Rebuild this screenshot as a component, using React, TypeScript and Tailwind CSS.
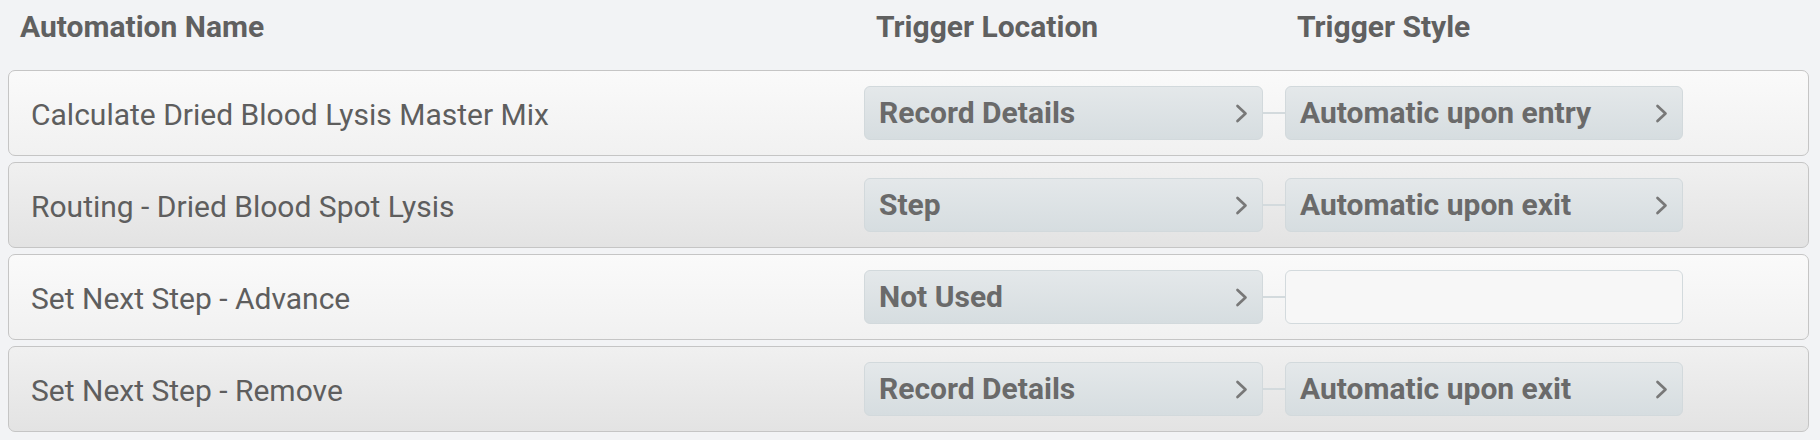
import React from "react";

type Row = { name: string; location: string; style: string | null; shade: "light" | "dark" };

const rows: Row[] = [
  { name: "Calculate Dried Blood Lysis Master Mix", location: "Record Details", style: "Automatic upon entry", shade: "light" },
  { name: "Routing - Dried Blood Spot Lysis", location: "Step", style: "Automatic upon exit", shade: "dark" },
  { name: "Set Next Step - Advance", location: "Not Used", style: null, shade: "light" },
  { name: "Set Next Step - Remove", location: "Record Details", style: "Automatic upon exit", shade: "dark" },
];

function Chevron() {
  return (
    <svg width="13" height="19" viewBox="0 0 13 19" className="shrink-0">
      <polyline points="2.5,2 10.5,9.5 2.5,17" fill="none" stroke="#787878" strokeWidth="2.7" strokeLinecap="round" strokeLinejoin="round" />
    </svg>
  );
}

function Pill({ label, width }: { label: string; width: string }) {
  return (
    <div
      className={`${width} h-[54px] shrink-0 flex items-center justify-between pl-[14px] pr-[14px] rounded-[6px] border border-[#d2d9dc] bg-linear-to-b from-[#e4e8ea] to-[#d6dde0]`}
    >
      <span className="text-[30px] leading-[30px] font-bold text-[#6a6a6a] whitespace-nowrap">{label}</span>
      <Chevron />
    </div>
  );
}

export default function App() {
  return (
    <div className="min-h-screen bg-[#f2f3f5] pl-2 pr-[11px] font-['Roboto','Liberation_Sans',sans-serif]">
      <div className="flex h-[70px] pt-[12px] text-[30px] leading-[30px] font-bold text-[#606060]">
        <div className="flex-1 pl-[12px]">Automation Name</div>
        <div className="w-[421px] pl-[12px]">Trigger Location</div>
        <div className="w-[398px] pl-[12px]">Trigger Style</div>
        <div className="w-[126px]" />
      </div>
      <div className="flex flex-col gap-[6px]">
        {rows.map((r) => (
          <div
            key={r.name}
            className={`flex items-center h-[86px] pl-[22px] pr-[125px] rounded-[7px] border border-[#c5c5c5] bg-linear-to-b ${
              r.shade === "light" ? "from-[#fafafa] to-[#f1f1f1]" : "from-[#f0f0f0] to-[#e3e3e3]"
            }`}
          >
            <div className="flex-1 pt-[3px] text-[30px] leading-[30px] text-[#5e5e5e] whitespace-nowrap">{r.name}</div>
            <Pill label={r.location} width="w-[399px]" />
            <div className="w-[22px] h-[2px] bg-[#d3dadd] shrink-0" />
            {r.style ? (
              <Pill label={r.style} width="w-[398px]" />
            ) : (
              <div className="w-[398px] h-[54px] shrink-0 rounded-[6px] border border-[#d3dadd] bg-[#f7f7f7]" />
            )}
          </div>
        ))}
      </div>
    </div>
  );
}
